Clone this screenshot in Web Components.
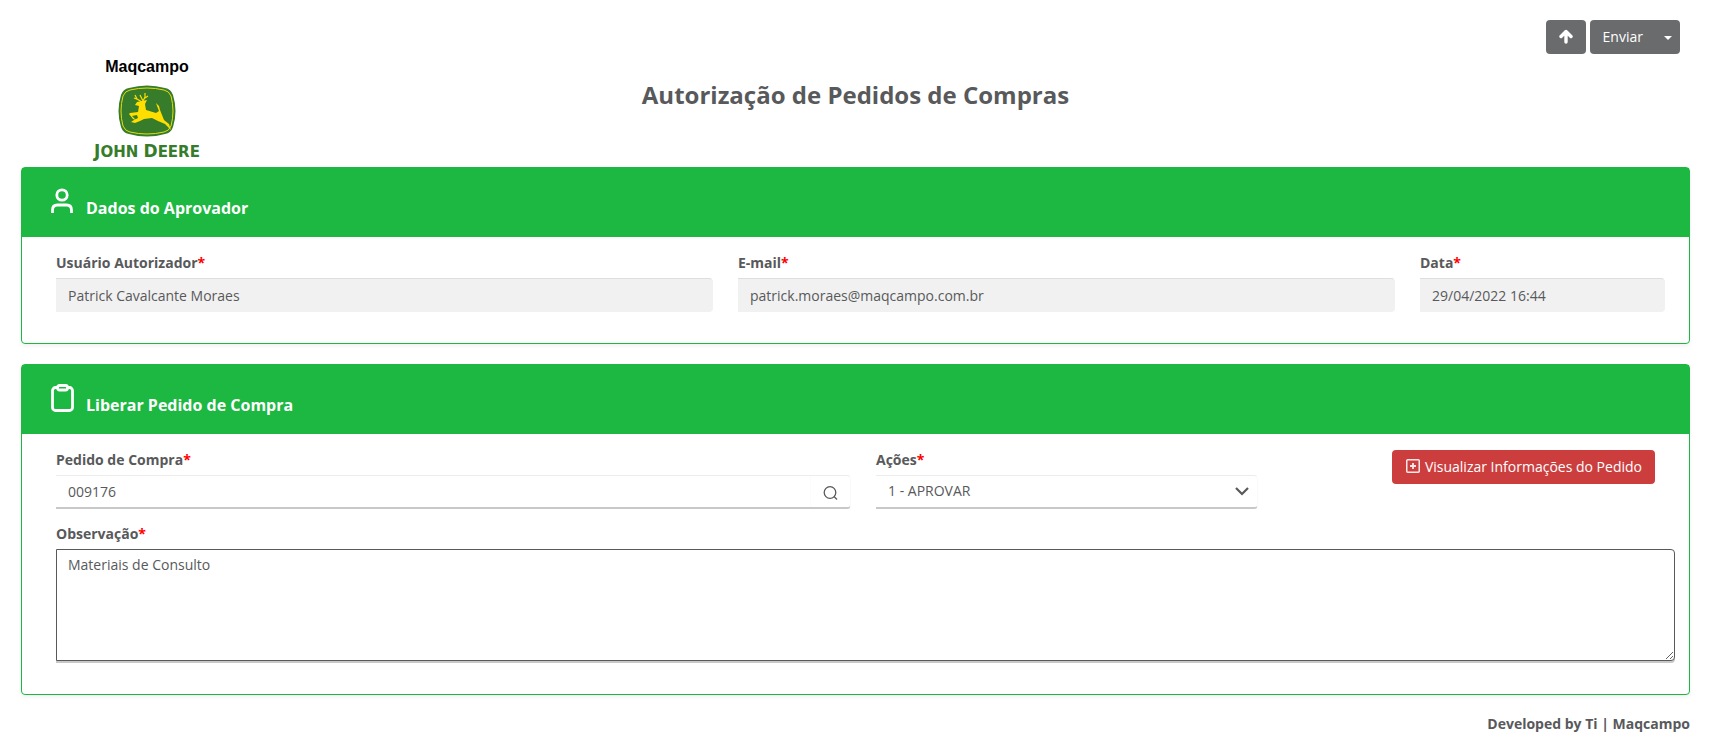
<!DOCTYPE html>
<html lang="pt-BR">
<head>
<meta charset="utf-8">
<title>Autorização de Pedidos de Compras</title>
<style>
  body { margin: 0; background: #fff; color: #58595b; font: 14px/20px "Open Sans", sans-serif; }
</style>
</head>
<body>
<purchase-page></purchase-page>

<script>
const define = (name, html, setup) => {
  const template = document.createElement('template');
  template.innerHTML = html;
  customElements.define(name, class extends HTMLElement {
    constructor() {
      super();
      this.attachShadow({ mode: 'open' }).append(template.content.cloneNode(true));
    }
    connectedCallback() { if (setup) setup(this, this.shadowRoot); }
  });
};

define('brand-logo', `
  <style>
    :host { display: flex; flex-direction: column; align-items: center; width: 120px; }
    .company { font: bold 16px/20px "Liberation Sans", sans-serif; color: #000; }
    svg { display: block; margin-top: 8px; }
    .brand { font: bold 15px/20px "DejaVu Sans", sans-serif; color: #367c2b; margin-top: 4px; white-space: nowrap; }
    .brand b { font-size: 17px; }
  </style>
  <span class="company">Maqcampo</span>
  <svg width="58" height="52" viewBox="0 0 58 52" aria-hidden="true">
    <path d="M11 3Q29-2 47 3Q53 4 55 10Q60 26 55 42Q53 48 47 49Q29 54 11 49Q5 48 3 42Q-2 26 3 10Q5 4 11 3Z" fill="#367c2b"/>
    <path d="M12 5Q29 1 46 5Q51 6 53 11Q57 26 53 41Q51 46 46 47Q29 51 12 47Q7 46 5 41Q1 26 5 11Q7 6 12 5Z" fill="none" stroke="#e6dc10" stroke-width="1"/>
    <path d="M24 17L19 14L17 10M21 15L16 13M25 16L22 10M25 16L27 12L27 8M27 13L30 11" fill="none" stroke="#ffde00" stroke-width="1.200"/>
    <path d="M17 20L19 17L24 16L29 15L27 19L28 25L38 28L41 26L39 21L38 18L41 21L42 25L44 30L46 35L51 39L53 45L47 39L40 36L34 33L26 34L22 36L17 38L13 37L16 35L20 33L19 30L14 31L18 35L15 34L11 29L12 28L20 27L21 21Z" fill="#ffde00"/>
  </svg>
  <span class="brand"><b>J</b>OHN <b>D</b>EERE</span>
`);

define('send-actions', `
  <style>
    :host { display: flex; gap: 4px; }
    button { font: inherit; color: #fff; background: #6a6b6d; border: 0; height: 34px; padding: 0; cursor: pointer; }
    .up { width: 40px; border-radius: 4px; display: grid; place-items: center; }
    .up svg { margin-bottom: 2px; }
    .split { display: flex; }
    .send { padding: 0 13px; border-radius: 4px 0 0 4px; }
    .more { width: 24px; border-radius: 0 4px 4px 0; display: grid; place-items: center; }
    .more svg { margin-top: 2px; }
  </style>
  <button class="up" aria-label="Voltar ao topo">
    <svg width="14" height="15" viewBox="0 0 14 15"><path d="M7 13V3M2 7.500L7 2.500L12 7.500" fill="none" stroke="#fff" stroke-width="3.400" stroke-linecap="round" stroke-linejoin="round"/></svg>
  </button>
  <div class="split">
    <button class="send">Enviar</button>
    <button class="more" aria-label="Mais opções">
      <svg width="8" height="4" viewBox="0 0 8 4"><path d="M0 0H8L4 4Z" fill="#fff"/></svg>
    </button>
  </div>
`);

define('form-panel', `
  <style>
    :host { display: block; border: 1px solid #1cb841; border-radius: 4px; box-shadow: 0 2px 4px rgba(0,0,0,.06); background: #fff; }
    header { background: #1cb841; color: #fff; height: 69px; display: flex; box-sizing: border-box; padding: 18px 28px 0; gap: 11px; }
    h2 { margin: 10px 0 0; font-size: 16px; line-height: 24px; }
    .body { padding: 16px 14px 0 34px; }
    ::slotted(svg) { display: block; flex: none; }
  </style>
  <header><slot name="icon"></slot><h2></h2></header>
  <div class="body"><slot></slot></div>
`, (host, root) => { root.querySelector('h2').textContent = host.getAttribute('heading'); });

define('form-field', `
  <style>
    :host { display: block; }
    label { display: block; font-weight: bold; line-height: 20px; margin-bottom: 5px; }
    label span { color: #f00; }
    .control { position: relative; }
    input, select, textarea {
      display: block; box-sizing: border-box; width: 100%; height: 34px; margin: 0; outline: 0;
      font: inherit; color: #58595b; background: #fff; appearance: none;
      border: 1px solid #fafafa; border-top-color: #ececec; border-bottom: 2px solid #c8c8c8; border-radius: 0 4px 4px 0; padding: 0 11px;
    }
    input, select { border-left-width: 0; padding-left: 12px; }
    select { padding-bottom: 2px; padding-left: 12px; }
    input[readonly] { background: #f1f1f1; border: 1px solid #f1f1f1; border-left-width: 0; border-top-color: #dedede; }
    textarea { height: 112px; padding: 5px 11px; border: 1px solid #58595b; border-radius: 0 4px 4px 0; box-shadow: 0 2px 0 #c8c8c8; }
    svg { position: absolute; pointer-events: none; }
    .search { right: 13px; top: 10px; }
    .search-line { position: absolute; right: 40px; top: 1px; bottom: 2px; border-left: 1px solid #fcfcfc; }
    .arrow { right: 8px; top: 11px; }
  </style>
  <label for="control"></label>
  <div class="control"></div>
`, (host, root) => {
  const label = root.querySelector('label');
  label.textContent = host.getAttribute('label');
  const star = document.createElement('span');
  star.textContent = '*';
  label.append(star);
  const box = root.querySelector('.control');
  const value = host.getAttribute('value');
  const kind = host.getAttribute('kind');
  if (kind === 'select') {
    box.innerHTML = `<select id="control"><option>${value}</option></select>
      <svg class="arrow" width="16" height="10" viewBox="0 0 16 10"><path d="M2 2L8 8L14 2" fill="none" stroke="#58595b" stroke-width="2.200"/></svg>`;
  } else if (kind === 'textarea') {
    box.innerHTML = `<textarea id="control">${value}</textarea>`;
  } else if (kind === 'search') {
    box.innerHTML = `<input id="control" value="${value}"><span class="search-line"></span>
      <svg class="search" width="16" height="16" viewBox="0 0 16 16" fill="none" stroke="#58595b" stroke-width="1.300"><circle cx="8" cy="7.500" r="5.800"/><path d="M12 11.500L15 14.500"/></svg>`;
  } else {
    box.innerHTML = `<input id="control" readonly value="${value}">`;
  }
});

define('order-button', `
  <style>
    :host { display: block; }
    button { display: flex; align-items: center; gap: 5px; height: 34px; padding: 0 13px 0 14px; border: 0; border-radius: 4px;
      background: #cc3e3e; color: #fff; font: inherit; white-space: nowrap; cursor: pointer; }
    svg { margin-bottom: 2px; }
  </style>
  <button>
    <svg width="14" height="14" viewBox="0 0 14 14" fill="none" stroke="#fbe9e9"><rect x="0.750" y="0.750" width="12.500" height="12.500" rx="1" stroke-width="1.500"/><path d="M7 4V10M4 7H10" stroke-width="1.800"/></svg>
    <span><slot></slot></span>
  </button>
`);

define('purchase-page', `
  <style>
    :host { display: block; padding: 20px 23px 14px 21px; }
    .top { display: grid; grid-template-columns: 1fr auto 1fr; height: 147px; }
    brand-logo { margin: 37px 0 0 66px; }
    h1 { margin: 59px 0 0; font-size: 24px; line-height: 32px; }
    send-actions { justify-self: end; margin-right: 10px; }
    form-panel + form-panel { margin-top: 20px; }
    .row { display: grid; column-gap: 25px; }
    .approver { grid-template-columns: 657fr 657fr 245fr; padding: 0 10px 31px 0; }
    .order { grid-template-columns: 795fr 382fr 372fr; padding: 0 20px 15px 0; }
    order-button { justify-self: end; }
    .note { padding-bottom: 33px; }
    footer { margin-top: 19px; text-align: right; font-weight: bold; line-height: 20px; }
  </style>
  <div class="top">
    <brand-logo></brand-logo>
    <h1>Autorização de Pedidos de Compras</h1>
    <send-actions></send-actions>
  </div>
  <form-panel heading="Dados do Aprovador">
    <svg slot="icon" width="25" height="28" viewBox="0 0 25 28" fill="none" stroke="#fff" stroke-width="2.800"><circle cx="12" cy="9" r="5.200"/><path d="M2.500 27V24Q2.500 19 7.500 19H16.500Q21.500 19 21.500 24V27"/></svg>
    <div class="row approver">
      <form-field label="Usuário Autorizador" value="Patrick Cavalcante Moraes"></form-field>
      <form-field label="E-mail" value="patrick.moraes@maqcampo.com.br"></form-field>
      <form-field label="Data" value="29/04/2022 16:44"></form-field>
    </div>
  </form-panel>
  <form-panel heading="Liberar Pedido de Compra">
    <svg slot="icon" width="25" height="30" viewBox="0 0 25 30" fill="none" stroke="#fff" stroke-width="2.800"><rect x="2.500" y="4.500" width="20" height="23" rx="3"/><rect x="7.500" y="2.500" width="10" height="4.500" rx="2" fill="#1cb841"/></svg>
    <div class="row order">
      <form-field kind="search" label="Pedido de Compra" value="009176"></form-field>
      <form-field kind="select" label="Ações" value="1 - APROVAR"></form-field>
      <order-button>Visualizar Informações do Pedido</order-button>
    </div>
    <form-field class="note" kind="textarea" label="Observação" value="Materiais de Consulto"></form-field>
  </form-panel>
  <footer>Developed by Ti | Maqcampo</footer>
`);
</script>
</body>
</html>
